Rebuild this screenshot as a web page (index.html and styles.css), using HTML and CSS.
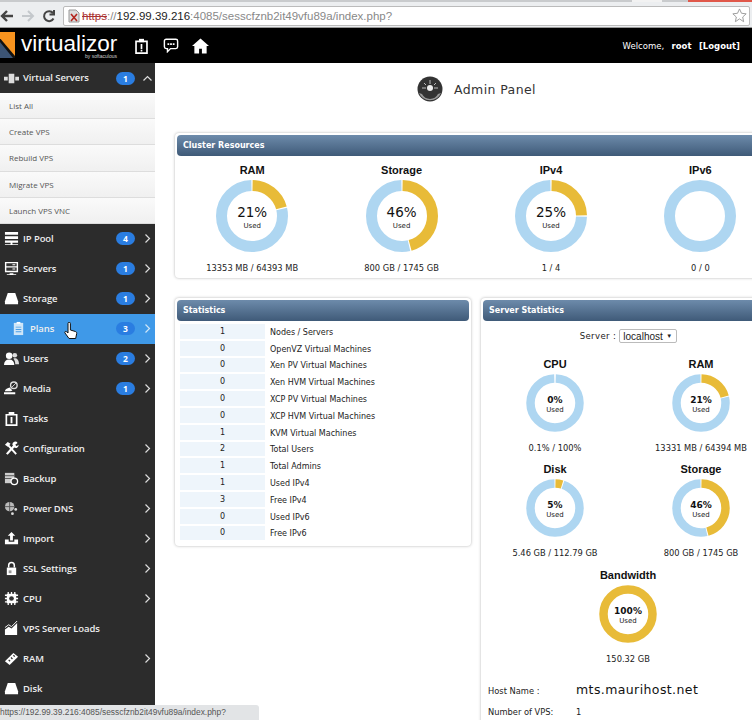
FILE: index.html
```html
<!DOCTYPE html>
<html lang="en">
<head>
    <meta charset="UTF-8">
    <title>Virtualizor</title>
    <link rel="stylesheet" href="styles.css">
</head>
<body>
  <div class="page">
    <div class="tabstrip"><span class="tab-gap"></span><span class="tab-close"></span></div>
    <div class="toolbar">
        <svg class="tb-icon" width="14" height="14" viewBox="0 0 14 14"><path d="M13 7H3M7 2L2 7l5 5" fill="none" stroke="#444" stroke-width="2.4"/></svg>
        <svg class="tb-icon" width="14" height="14" viewBox="0 0 14 14"><path d="M1 7h10M7 2l5 5-5 5" fill="none" stroke="#c4c8cc" stroke-width="2"/></svg>
        <svg class="tb-icon" width="14" height="14" viewBox="0 0 14 14"><path d="M11.500 9.500A5 5 0 1 1 11 4M12 1v4.500H7.500" fill="none" stroke="#444" stroke-width="2"/></svg>
        <div class="address">
            <svg width="14" height="14" viewBox="0 0 14 14"><path d="M2 1h7l3 3v9H2z" fill="#ddd" stroke="#999"/><path d="M4 5l6 7M10 5l-6 7" stroke="#b3261e" stroke-width="1.600"/></svg>
            <span class="proto">https</span><span class="url-dim">://</span><span class="url-host">192.99.39.216</span><span class="url-dim">:4085/sesscfznb2it49vfu89a/index.php?</span>
            <svg class="star" width="15" height="15" viewBox="0 0 16 16"><path d="M8 1l2.100 4.600 5 .6-3.700 3.400 1 5L8 11.600 3.600 14.600l1-5L.900 6.200l5-.6z" fill="none" stroke="#999"/></svg>
        </div>
    </div>

    <div class="topbar">
        <div class="logo">
            <svg width="20" height="26" viewBox="0 0 20 26"><path d="M0 0h15v26L0 8z" fill="#f7931e"/><path d="M-2 4l17 20v2H0z" fill="#111"/><path d="M0 10l13 16H0z" fill="#3c5474"/></svg>
            <div class="logo-text">
                <span class="logo-name">virtualizor</span>
                <span class="logo-by">by softaculous</span>
            </div>
        </div>
        <svg class="top-icon" width="15" height="16" viewBox="0 0 17 19"><path d="M2 4h13v14H2z" fill="none" stroke="#fff" stroke-width="2"/><path d="M5.500 1h6v4h-6z" fill="#fff"/><path d="M7.500 7h2v6h-2zM7.500 14h2v2h-2z" fill="#fff"/></svg>
        <svg class="top-icon" width="16" height="15" viewBox="0 0 17 17"><path d="M3 1.500h11a2 2 0 0 1 2 2v6.500a2 2 0 0 1-2 2H8l-3.500 3.500V12H3a2 2 0 0 1-2-2V3.500a2 2 0 0 1 2-2z" fill="none" stroke="#fff" stroke-width="1.600"/><path d="M4.500 6h2v2h-2zM7.500 6h2v2h-2zM10.500 6h2v2h-2z" fill="#fff"/></svg>
        <svg class="top-icon" width="17" height="16" viewBox="0 0 18 16"><path d="M9 0L0 8h2.500v8h5v-5h3v5h5V8H18z" fill="#fff"/></svg>
        <div class="welcome">Welcome, &nbsp;<b>root</b> &nbsp;<b>[Logout]</b></div>
    </div>

    <div class="layout">
        <aside class="sidebar">
            <div class="nav-row nav-open">
                <svg class="nav-icon" viewBox="0 0 16 16"><path d="M5 3h6v10H5zM0 6h4v4H0zM12 6h4v4h-4z" fill="#ddd"/></svg>
                <span class="nav-label">Virtual Servers</span>
                <span class="badge">1</span>
                <svg class="chev" width="9" height="9" viewBox="0 0 9 9"><path d="M.500 6.500l4-4 4 4" fill="none" stroke="#ddd" stroke-width="1.200"/></svg>
            </div>
            <ul class="submenu">
                <li>List All</li>
                <li>Create VPS</li>
                <li>Rebuild VPS</li>
                <li>Migrate VPS</li>
                <li>Launch VPS VNC</li>
            </ul>
            <div class="nav-row">
                <svg class="nav-icon" viewBox="0 0 16 16"><path d="M1 1h14v3H1zM1 5.500h14v3H1zM1 10h14v2.500H1zM7 12.500h2V14h6v1H1v-1h6z" fill="#fff"/></svg>
                <span class="nav-label">IP Pool</span>
                <span class="badge">4</span>
                <svg class="chev" width="9" height="9" viewBox="0 0 9 9"><path d="M2.500.500l4 4-4 4" fill="none" stroke="#ddd" stroke-width="1.200"/></svg>
            </div>
            <div class="nav-row">
                <svg class="nav-icon" viewBox="0 0 16 16"><path d="M1 1h14v11H1zM6 13h4v1h3v1H3v-1h3z" fill="#fff"/><path d="M2.500 2.500h11v3h-11zM2.500 7h11v3.500h-11z" fill="#333"/><path d="M9 3.500h3v1H9zM9 8h3v1H9z" fill="#fff"/></svg>
                <span class="nav-label">Servers</span>
                <span class="badge">1</span>
                <svg class="chev" width="9" height="9" viewBox="0 0 9 9"><path d="M2.500.500l4 4-4 4" fill="none" stroke="#ddd" stroke-width="1.200"/></svg>
            </div>
            <div class="nav-row">
                <svg class="nav-icon" viewBox="0 0 16 16"><path d="M4 2h8l3 9v3H1v-3z" fill="#fff"/></svg>
                <span class="nav-label">Storage</span>
                <span class="badge">1</span>
                <svg class="chev" width="9" height="9" viewBox="0 0 9 9"><path d="M2.500.500l4 4-4 4" fill="none" stroke="#ddd" stroke-width="1.200"/></svg>
            </div>
            <div class="nav-row nav-active">
                <svg class="nav-icon" viewBox="0 0 16 16"><path d="M3 2h10v13H3z" fill="#cfe6f8"/><path d="M6 1h4v2H6z" fill="#fff"/><path d="M5 6h6v1H5zM5 8.500h6v1H5zM5 11h6v1H5z" fill="#4a9ee6"/></svg>
                <span class="nav-label">Plans</span>
                <span class="badge">3</span>
                <svg class="chev" width="9" height="9" viewBox="0 0 9 9"><path d="M2.500.500l4 4-4 4" fill="none" stroke="#cfe6f8" stroke-width="1.200"/></svg>
                <svg class="cursor" width="14" height="18" viewBox="0 0 14 18"><path d="M4 1.500a1.200 1.200 0 0 1 2.400 0V8l5 1.500c1 .4 1.500 1 1.300 2l-1 5H5L1 11c-.8-1 .5-2.200 1.500-1.300L4 11z" fill="#fff" stroke="#111"/></svg>
            </div>
            <div class="nav-row">
                <svg class="nav-icon" viewBox="0 0 16 16"><circle cx="5.500" cy="5" r="3.500" fill="#fff"/><path d="M0 15c0-4 2-6 5.500-6s5.500 2 5.500 6z" fill="#fff"/><circle cx="11.500" cy="4.500" r="2.500" fill="#ddd"/><path d="M10 8c3-1 6 1 6 6h-4c0-2-.5-4-2-6z" fill="#ddd"/></svg>
                <span class="nav-label">Users</span>
                <span class="badge">2</span>
                <svg class="chev" width="9" height="9" viewBox="0 0 9 9"><path d="M2.500.500l4 4-4 4" fill="none" stroke="#ddd" stroke-width="1.200"/></svg>
            </div>
            <div class="nav-row">
                <svg class="nav-icon" viewBox="0 0 16 16"><circle cx="10.500" cy="4.500" r="3.500" fill="none" stroke="#ddd" stroke-width="1.500"/><path d="M8 7l5-5" stroke="#ddd"/><path d="M6 7l3 3-2 1H1c0-2 2-3 5-4zM0 12h12v2H0z" fill="#fff"/></svg>
                <span class="nav-label">Media</span>
                <span class="badge">1</span>
                <svg class="chev" width="9" height="9" viewBox="0 0 9 9"><path d="M2.500.500l4 4-4 4" fill="none" stroke="#ddd" stroke-width="1.200"/></svg>
            </div>
            <div class="nav-row">
                <svg class="nav-icon" viewBox="0 0 16 16"><path d="M2.500 4h11v11h-11z" fill="none" stroke="#fff" stroke-width="1.800"/><path d="M5 1h6v3H5zM7 6.500h2V13H7z" fill="#fff"/></svg>
                <span class="nav-label">Tasks</span>
            </div>
            <div class="nav-row">
                <svg class="nav-icon" viewBox="0 0 16 16"><path d="M3 14l8-9" stroke="#fff" stroke-width="2.400"/><path d="M13 14L4 4" stroke="#fff" stroke-width="2"/><path d="M1 4l3-3 3 2-3 3zM9 4a3 3 0 0 1 5.500-2L12 4l1.500 1.500L15.500 4A3 3 0 0 1 11 7z" fill="#fff"/></svg>
                <span class="nav-label">Configuration</span>
                <svg class="chev" width="9" height="9" viewBox="0 0 9 9"><path d="M2.500.500l4 4-4 4" fill="none" stroke="#ddd" stroke-width="1.200"/></svg>
            </div>
            <div class="nav-row">
                <svg class="nav-icon" viewBox="0 0 16 16"><path d="M1 2h10v11H1z" fill="#ccc"/><path d="M1 5h10M1 8h10" stroke="#555"/><circle cx="11" cy="11" r="3.500" fill="#333" stroke="#fff" stroke-width="1.400"/></svg>
                <span class="nav-label">Backup</span>
                <svg class="chev" width="9" height="9" viewBox="0 0 9 9"><path d="M2.500.500l4 4-4 4" fill="none" stroke="#ddd" stroke-width="1.200"/></svg>
            </div>
            <div class="nav-row">
                <svg class="nav-icon" viewBox="0 0 16 16"><circle cx="6" cy="6" r="5" fill="#bbb"/><path d="M1 6h10M6 1v10" stroke="#555"/><circle cx="12.500" cy="9" r="1.500" fill="#ddd"/><circle cx="9" cy="13.500" r="1.500" fill="#ddd"/></svg>
                <span class="nav-label">Power DNS</span>
                <svg class="chev" width="9" height="9" viewBox="0 0 9 9"><path d="M2.500.500l4 4-4 4" fill="none" stroke="#ddd" stroke-width="1.200"/></svg>
            </div>
            <div class="nav-row">
                <svg class="nav-icon" viewBox="0 0 16 16"><path d="M8 1l4 4H9.500v5h-3V5H4z" fill="#fff"/><path d="M1 9h4v2.500h6V9h4v5H1z" fill="#fff"/></svg>
                <span class="nav-label">Import</span>
                <svg class="chev" width="9" height="9" viewBox="0 0 9 9"><path d="M2.500.500l4 4-4 4" fill="none" stroke="#ddd" stroke-width="1.200"/></svg>
            </div>
            <div class="nav-row">
                <svg class="nav-icon" viewBox="0 0 16 16"><path d="M5 7V4.500a3 3 0 0 1 6 0V7" fill="none" stroke="#fff" stroke-width="1.600"/><path d="M3 7h10v8H3z" fill="#fff"/><path d="M5 10h3v3H5z" fill="#999"/></svg>
                <span class="nav-label">SSL Settings</span>
                <svg class="chev" width="9" height="9" viewBox="0 0 9 9"><path d="M2.500.500l4 4-4 4" fill="none" stroke="#ddd" stroke-width="1.200"/></svg>
            </div>
            <div class="nav-row">
                <svg class="nav-icon" viewBox="0 0 16 16"><path d="M3 3h10v10H3z" fill="#fff"/><path d="M4.500 1v14M8 1v14M11.500 1v14M1 4.500h14M1 8h14M1 11.500h14" stroke="#fff" stroke-width="1.400"/><circle cx="8" cy="8" r="2.500" fill="#333"/></svg>
                <span class="nav-label">CPU</span>
                <svg class="chev" width="9" height="9" viewBox="0 0 9 9"><path d="M2.500.500l4 4-4 4" fill="none" stroke="#ddd" stroke-width="1.200"/></svg>
            </div>
            <div class="nav-row">
                <svg class="nav-icon" viewBox="0 0 16 16"><path d="M1 9l4-3 3 2 6-6v13H1z" fill="#fff"/><path d="M1 7l4-3 3 2 6-6" fill="none" stroke="#fff"/></svg>
                <span class="nav-label">VPS Server Loads</span>
            </div>
            <div class="nav-row">
                <svg class="nav-icon" viewBox="0 0 16 16"><path d="M1 11l9-9 5 4-9 9z" fill="#fff"/><path d="M5 9.500l1.500 1.500M7.500 7l1.500 1.500M10 4.500l1.500 1.500" stroke="#333" stroke-width="1.400"/></svg>
                <span class="nav-label">RAM</span>
                <svg class="chev" width="9" height="9" viewBox="0 0 9 9"><path d="M2.500.500l4 4-4 4" fill="none" stroke="#ddd" stroke-width="1.200"/></svg>
            </div>
            <div class="nav-row">
                <svg class="nav-icon" viewBox="0 0 16 16"><path d="M4 2h8l3 9v3H1v-3z" fill="#fff"/></svg>
                <span class="nav-label">Disk</span>
            </div>
        </aside>

        <main class="content">
            <div class="page-title">
                <svg width="26" height="26" viewBox="0 0 26 26"><circle cx="13" cy="13" r="12.500" fill="#333"/><path d="M2 17a12 12 0 0 0 22 0l-3 1a9 9 0 0 1-16 0z" fill="#999"/><circle cx="13" cy="12" r="3" fill="#eee"/><path d="M5 12h4M17 12h4M13 4v4M7 7l2 2M19 7l-2 2" stroke="#bbb"/></svg>
                <span>Admin Panel</span>
            </div>

            <section class="panel panel-cluster">
                <h2 class="panel-head">Cluster Resources</h2>
                <div class="cluster-grid">
                    <div class="gauge">
                        <div class="gauge-name">RAM</div>
                        <div class="donut donut-big">
                            <svg viewBox="0 0 72 72"><circle class="ring-free" cx="36" cy="36" r="30.500" pathLength="100" stroke-dasharray="78.400 21.600" stroke-dashoffset="-21.300"/><circle class="ring-used" cx="36" cy="36" r="30.500" pathLength="100" stroke-dasharray="20.400 79.600" stroke-dashoffset="-.3"/></svg>
                            <div class="donut-text"><b>21%</b><small>Used</small></div>
                        </div>
                        <div class="gauge-value">13353 MB / 64393 MB</div>
                    </div>
                    <div class="gauge">
                        <div class="gauge-name">Storage</div>
                        <div class="donut donut-big">
                            <svg viewBox="0 0 72 72"><circle class="ring-free" cx="36" cy="36" r="30.500" pathLength="100" stroke-dasharray="53.400 46.600" stroke-dashoffset="-46.300"/><circle class="ring-used" cx="36" cy="36" r="30.500" pathLength="100" stroke-dasharray="45.400 54.600" stroke-dashoffset="-.3"/></svg>
                            <div class="donut-text"><b>46%</b><small>Used</small></div>
                        </div>
                        <div class="gauge-value">800 GB / 1745 GB</div>
                    </div>
                    <div class="gauge">
                        <div class="gauge-name">IPv4</div>
                        <div class="donut donut-big">
                            <svg viewBox="0 0 72 72"><circle class="ring-free" cx="36" cy="36" r="30.500" pathLength="100" stroke-dasharray="74.400 25.600" stroke-dashoffset="-25.300"/><circle class="ring-used" cx="36" cy="36" r="30.500" pathLength="100" stroke-dasharray="24.400 75.600" stroke-dashoffset="-.3"/></svg>
                            <div class="donut-text"><b>25%</b><small>Used</small></div>
                        </div>
                        <div class="gauge-value">1 / 4</div>
                    </div>
                    <div class="gauge">
                        <div class="gauge-name">IPv6</div>
                        <div class="donut donut-big">
                            <svg viewBox="0 0 72 72"><circle class="ring-free" cx="36" cy="36" r="30.500"/></svg>
                        </div>
                        <div class="gauge-value">0 / 0</div>
                    </div>
                </div>
            </section>

            <div class="columns">
                <section class="panel panel-stats">
                    <h2 class="panel-head">Statistics</h2>
                    <table class="stats-table">
                        <tr><td>1</td><td>Nodes / Servers</td></tr>
                        <tr><td>0</td><td>OpenVZ Virtual Machines</td></tr>
                        <tr><td>0</td><td>Xen PV Virtual Machines</td></tr>
                        <tr><td>0</td><td>Xen HVM Virtual Machines</td></tr>
                        <tr><td>0</td><td>XCP PV Virtual Machines</td></tr>
                        <tr><td>0</td><td>XCP HVM Virtual Machines</td></tr>
                        <tr><td>1</td><td>KVM Virtual Machines</td></tr>
                        <tr><td>2</td><td>Total Users</td></tr>
                        <tr><td>1</td><td>Total Admins</td></tr>
                        <tr><td>1</td><td>Used IPv4</td></tr>
                        <tr><td>3</td><td>Free IPv4</td></tr>
                        <tr><td>0</td><td>Used IPv6</td></tr>
                        <tr><td>0</td><td>Free IPv6</td></tr>
                    </table>
                </section>

                <section class="panel panel-server">
                    <h2 class="panel-head">Server Statistics</h2>
                    <div class="server-pick">
                        <span>Server :</span>
                        <div class="server-select"><span>localhost</span><span class="select-arrow">▼</span></div>
                    </div>
                    <div class="server-grid">
                        <div class="gauge gauge-small">
                            <div class="gauge-name">CPU</div>
                            <div class="donut donut-small">
                                <svg viewBox="0 0 58 58"><circle class="ring-free ring-thin" cx="29" cy="29" r="24.500" pathLength="100" stroke-dasharray="99 1" stroke-dashoffset="-.5"/></svg>
                                <div class="donut-text"><b>0%</b><small>Used</small></div>
                            </div>
                            <div class="gauge-value">0.1% / 100%</div>
                        </div>
                        <div class="gauge gauge-small">
                            <div class="gauge-name">RAM</div>
                            <div class="donut donut-small">
                                <svg viewBox="0 0 58 58"><circle class="ring-free ring-thin" cx="29" cy="29" r="24.500" pathLength="100" stroke-dasharray="78.400 21.600" stroke-dashoffset="-21.300"/><circle class="ring-used ring-thin" cx="29" cy="29" r="24.500" pathLength="100" stroke-dasharray="20.400 79.600" stroke-dashoffset="-.3"/></svg>
                                <div class="donut-text"><b>21%</b><small>Used</small></div>
                            </div>
                            <div class="gauge-value">13331 MB / 64394 MB</div>
                        </div>
                        <div class="gauge gauge-small">
                            <div class="gauge-name">Disk</div>
                            <div class="donut donut-small">
                                <svg viewBox="0 0 58 58"><circle class="ring-free ring-thin" cx="29" cy="29" r="24.500" pathLength="100" stroke-dasharray="94.400 5.600" stroke-dashoffset="-5.300"/><circle class="ring-used ring-thin" cx="29" cy="29" r="24.500" pathLength="100" stroke-dasharray="4.400 95.600" stroke-dashoffset="-.3"/></svg>
                                <div class="donut-text"><b>5%</b><small>Used</small></div>
                            </div>
                            <div class="gauge-value">5.46 GB / 112.79 GB</div>
                        </div>
                        <div class="gauge gauge-small">
                            <div class="gauge-name">Storage</div>
                            <div class="donut donut-small">
                                <svg viewBox="0 0 58 58"><circle class="ring-free ring-thin" cx="29" cy="29" r="24.500" pathLength="100" stroke-dasharray="53.400 46.600" stroke-dashoffset="-46.300"/><circle class="ring-used ring-thin" cx="29" cy="29" r="24.500" pathLength="100" stroke-dasharray="45.400 54.600" stroke-dashoffset="-.3"/></svg>
                                <div class="donut-text"><b>46%</b><small>Used</small></div>
                            </div>
                            <div class="gauge-value">800 GB / 1745 GB</div>
                        </div>
                        <div class="gauge gauge-small gauge-wide">
                            <div class="gauge-name">Bandwidth</div>
                            <div class="donut donut-small">
                                <svg viewBox="0 0 58 58"><circle class="ring-used ring-thin" cx="29" cy="29" r="24.500"/></svg>
                                <div class="donut-text"><b>100%</b><small>Used</small></div>
                            </div>
                            <div class="gauge-value">150.32 GB</div>
                        </div>
                    </div>
                    <div class="info-row info-host"><span>Host Name :</span><span class="host-name">mts.maurihost.net</span></div>
                    <div class="info-row"><span>Number of VPS:</span><span>1</span></div>
                </section>
            </div>
        </main>
    </div>
  </div>

  <div class="status-bubble">https://192.99.39.216:4085/sesscfznb2it49vfu89a/index.php?</div>
</body>
</html>
```

FILE: styles.css
```css
* {
    box-sizing: border-box;
    margin: 0;
    padding: 0;
}

html, body {
    height: 720px;
    overflow: hidden;
}

body {
    background-color: #fff;
    color: #222;
    font-family: 'DejaVu Sans', sans-serif;
    font-size: 9px;
    position: relative;
}

.page {
    width: 752px;
    height: 720px;
    overflow: hidden;
}

/* browser bar */
.tabstrip {
    height: 2px;
    background-color: #c9cbcd;
    display: flex;
    justify-content: flex-end;
}

.tab-gap {
    width: 30px;
    margin-right: 26px;
    background-color: #f2f2f2;
}

.tab-close {
    width: 64px;
    background-color: #e0584a;
}

.toolbar {
    height: 26px;
    background-color: #eceef0;
    border-bottom: 1px solid #999;
    display: flex;
    align-items: center;
    padding: 2px 2px 0 0;
    gap: 7px;
}

.tb-icon {
    flex: none;
}

.address {
    flex: 1;
    height: 20px;
    background-color: #fff;
    border: 1px solid #bbb;
    border-radius: 2px;
    display: flex;
    align-items: center;
    padding: 0 2px 0 3px;
    font-family: 'Liberation Sans', sans-serif;
    font-size: 11.500px;
}

.proto {
    color: #a33;
    text-decoration: line-through;
    margin-left: 1px;
}

.url-dim {
    color: #888;
}

.url-host {
    color: #222;
}

.star {
    margin-left: auto;
}

/* black header */
.topbar {
    height: 35px;
    background-color: #000;
    color: #fff;
    display: flex;
    align-items: center;
    padding-right: 12px;
}

.logo {
    width: 134px;
    display: flex;
    align-items: flex-start;
    flex: none;
}

.logo-text {
    display: flex;
    flex-direction: column;
    width: 96px;
    margin-left: 1px;
}

.logo-name {
    font-family: 'Liberation Sans', sans-serif;
    font-size: 22.500px;
    line-height: 23px;
}

.logo-by {
    font-family: 'Liberation Sans', sans-serif;
    font-size: 5px;
    line-height: 5px;
    margin-top: -1px;
    text-align: right;
    color: #ccc;
}

.top-icon {
    flex: none;
    margin-right: 13.500px;
}

.welcome {
    margin-left: auto;
    font-size: 8.500px;
    word-spacing: 1px;
}

/* page body */
.layout {
    display: flex;
    height: 657px;
}

.sidebar {
    width: 155px;
    flex: none;
    background-color: #2c2c2c;
    color: #eee;
    font-family: 'Open Sans', sans-serif;
    font-size: 9.500px;
    letter-spacing: -.1px;
}

.nav-row {
    height: 30px;
    display: flex;
    align-items: center;
    padding: 0 3px 0 4px;
    position: relative;
}

.nav-open .nav-label {
    padding-bottom: 1px;
}

.nav-icon {
    width: 15px;
    height: 15px;
    flex: none;
    margin-right: 4px;
}

.nav-label {
    flex: 1;
    font-weight: 600;
}

.badge {
    width: 19px;
    height: 13px;
    border-radius: 7px;
    background-color: #2a7de1;
    color: #fff;
    font-size: 8.500px;
    font-weight: 700;
    line-height: 13px;
    text-align: center;
    margin-right: 8px;
}

.chev {
    flex: none;
    width: 9px;
    margin-left: auto;
}

.badge + .chev {
    margin-left: 0;
}

.nav-active {
    background-color: #3f99e8;
    padding-left: 11px;
}

.cursor {
    position: absolute;
    left: 64px;
    top: 8px;
}

.submenu {
    list-style: none;
    background-color: #f5f5f5;
    color: #555;
    font-size: 8px;
    letter-spacing: 0;
}

.submenu li {
    height: 26.200px;
    line-height: 26px;
    padding-left: 9px;
    border-bottom: 1px solid #ddd;
    background: linear-gradient(#fafafa, #f0f0f0);
}

.content {
    width: 597px;
    flex: none;
    height: 657px;
    overflow: hidden;
    padding: 13px 0 0 20px;
}

.page-title {
    height: 26px;
    margin-left: 242px;
    display: flex;
    align-items: center;
    gap: 11px;
    font-size: 12.500px;
    letter-spacing: .4px;
    color: #333;
}

/* panels */
.panel {
    background-color: #fff;
    border-radius: 4px;
    box-shadow: 0 0 3px rgba(0, 0, 0, .3);
    padding: 2px;
}

.panel-head {
    height: 21px;
    background: linear-gradient(#6d8bab, #3f5a78);
    border-radius: 4px;
    color: #fff;
    font-size: 8px;
    font-weight: 700;
    line-height: 21px;
    padding-left: 6px;
}

.panel-cluster {
    width: 600px;
    height: 145px;
    margin-top: 31px;
}

.cluster-grid {
    display: flex;
    padding: 8px 0 0 .5px;
}

.gauge {
    text-align: center;
    flex: none;
    width: 149.400px;
}

.gauge-name {
    font-family: 'Liberation Sans', sans-serif;
    font-size: 11px;
    font-weight: 700;
    color: #111;
    line-height: 12px;
}

.donut {
    position: relative;
    margin: 4px auto 0;
}

.donut svg {
    display: block;
    width: 100%;
    height: 100%;
}

.donut-big {
    width: 72px;
    height: 72px;
}

.donut-small {
    width: 58px;
    height: 58px;
}

.ring-free, .ring-used {
    fill: none;
    stroke-width: 11px;
    transform: rotate(-90deg);
    transform-origin: center;
}

.ring-free {
    stroke: #aed6f1;
}

.ring-used {
    stroke: #e8bb38;
}

.ring-thin {
    stroke-width: 8.500px;
}

.donut-text {
    position: absolute;
    top: 0;
    left: 0;
    right: 0;
    bottom: 0;
    padding-top: 3px;
    display: flex;
    flex-direction: column;
    align-items: center;
    justify-content: center;
}

.donut-text b {
    font-weight: 400;
    font-size: 13.500px;
    line-height: 16px;
    color: #111;
}

.donut-text small {
    font-size: 7px;
    line-height: 10px;
    margin-top: 1px;
}

.donut-small .donut-text {
    padding-top: 4px;
}

.donut-small .donut-text b {
    font-size: 9px;
    font-weight: 700;
    line-height: 11px;
}

.donut-small .donut-text small {
    margin-top: -1px;
}

.gauge-value {
    margin-top: 11px;
    font-size: 8.300px;
    line-height: 11px;
}

.columns {
    display: flex;
    align-items: flex-start;
    gap: 10px;
    margin-top: 20px;
}

.panel-stats {
    width: 296px;
    height: 248px;
    flex: none;
}

.stats-table {
    border-collapse: separate;
    border-spacing: 0;
    margin: 3px 0 0 3px;
}

.stats-table td {
    height: 16.800px;
    font-size: 8px;
    padding: 0;
}

.stats-table td:first-child {
    width: 85px;
    text-align: center;
    background-color: #eef5fb;
    border-bottom: 2px solid #fff;
}

.stats-table td:last-child {
    padding-left: 5px;
}

.panel-server {
    width: 290px;
    height: 430px;
    flex: none;
}

.server-pick {
    padding: 8px 0 0 5px;
    display: flex;
    justify-content: center;
    align-items: center;
    gap: 3px;
    font-size: 8.500px;
    letter-spacing: .4px;
}

.server-select {
    width: 58px;
    height: 14px;
    display: flex;
    align-items: center;
    justify-content: space-between;
    padding: 0 4px 0 3px;
    font-family: 'Liberation Sans', sans-serif;
    font-size: 10px;
    letter-spacing: 0;
    background-color: #fff;
    border: 1px solid #bbb;
    border-radius: 2px;
}

.select-arrow {
    font-size: 6px;
}

.server-grid {
    display: grid;
    grid-template-columns: 146px 146px;
    margin-left: -1px;
    padding-top: 15px;
    row-gap: 9px;
}

.gauge-small {
    width: auto;
}

.gauge-wide {
    grid-column: 1 / 3;
    margin-top: 1px;
}

.info-row {
    display: flex;
    align-items: baseline;
    padding-left: 5px;
    margin-top: 10px;
    font-size: 8.300px;
}

.info-row span:first-child {
    width: 88px;
    flex: none;
}

.info-host {
    margin-top: 17px;
}

.host-name {
    font-size: 12.500px;
    letter-spacing: .4px;
    color: #111;
}

.status-bubble {
    position: absolute;
    left: 0;
    bottom: 0;
    width: 259px;
    height: 15px;
    background-color: #e2e4e6;
    border-top-right-radius: 3px;
    color: #555;
    font-family: 'Liberation Sans', sans-serif;
    font-size: 8.400px;
    line-height: 15px;
    white-space: nowrap;
    overflow: hidden;
}
```
